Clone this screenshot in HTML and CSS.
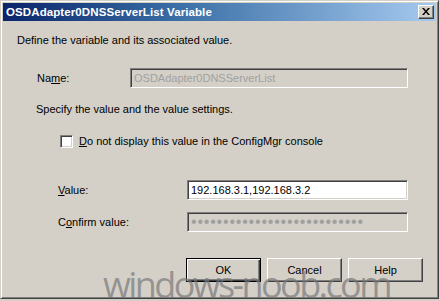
FILE: index.html
```html
<!DOCTYPE html>
<html>
<head>
<meta charset="utf-8">
<link rel="stylesheet" href="styles.css">
</head>
<body>
<div class="window">
  <div class="titlebar">
    <span class="title">OSDAdapter0DNSServerList Variable</span>
    <span class="close"><svg width="8" height="7" viewBox="0 0 8 7"><path d="M0 0h2l2 2.5 2-2.5h2l-3 3.5 3 3.5h-2l-2-2.5-2 2.5h-2l3-3.5z" fill="#000"/></svg></span>
  </div>
  <div class="content">
    <div class="intro">Define the variable and its associated value.</div>
    <div class="row name-row">
      <span class="label name-label">Na<u>m</u>e:</span>
      <div class="field disabled name-field">OSDAdapter0DNSServerList</div>
    </div>
    <div class="specify">Specify the value and the value settings.</div>
    <div class="check-row">
      <span class="checkbox"></span>
      <span class="check-label"><u>D</u>o not display this value in the ConfigMgr console</span>
    </div>
    <div class="row value-row">
      <span class="label sub-label"><u>V</u>alue:</span>
      <div class="field value-field">192.168.3.1,192.168.3.2</div>
    </div>
    <div class="row confirm-row">
      <span class="label sub-label">C<u>o</u>nfirm value:</span>
      <div class="field disabled value-field dots">•••••••••••••••••••••••••••</div>
    </div>
    <div class="buttons">
      <button class="btn default">OK</button>
      <button class="btn">Cancel</button>
      <button class="btn">Help</button>
    </div>
  </div>
  <div class="watermark">windows-noob.com</div>
</div>
</body>
</html>
```
FILE: styles.css
```css
html, body {
  margin: 0;
  padding: 0;
  width: 439px;
  height: 301px;
  overflow: hidden;
  background: #d4d0c8;
}
.window {
  position: relative;
  box-sizing: border-box;
  width: 439px;
  height: 299px;
  background: #d4d0c8;
  border-top: 1px solid #d4d0c8;
  border-left: 1px solid #d4d0c8;
  border-right: 1px solid #404040;
  border-bottom: 1px solid #404040;
  box-shadow: inset 1px 1px 0 #fff, inset -1px -1px 0 #808080;
  padding: 2px 2px;
  font-family: "Liberation Sans", Arial, sans-serif;
  font-size: 11px;
  color: #000;
  overflow: hidden;
}
.titlebar {
  height: 18px;
  display: flex;
  align-items: center;
  justify-content: space-between;
  background: linear-gradient(to right, #0a246a 0%, #3a6ea5 40%, #a6caf0 100%);
  padding: 0 2px 0 3px;
}
.title {
  color: #fff;
  font-weight: bold;
  font-size: 11.5px;
  letter-spacing: 0.1px;
}
.close {
  box-sizing: border-box;
  width: 16px;
  height: 14px;
  background: #d4d0c8;
  border-top: 1px solid #fff;
  border-left: 1px solid #fff;
  border-right: 1px solid #404040;
  border-bottom: 1px solid #404040;
  box-shadow: inset -1px -1px 0 #808080;
  display: flex;
  align-items: center;
  justify-content: center;
  padding-bottom: 1px;
}
.content {
  padding: 13px 0 0 14px;
}
.intro {
  line-height: 13px;
}
.row {
  display: flex;
  align-items: center;
}
.name-row {
  margin-top: 21px;
}
.name-label {
  margin-left: 20px;
  flex: 0 0 93px;
}
.label {
  line-height: 13px;
}
.field {
  box-sizing: border-box;
  height: 20px;
  border-top: 1px solid #808080;
  border-left: 1px solid #808080;
  border-right: 1px solid #fff;
  border-bottom: 1px solid #fff;
  box-shadow: inset 1px 1px 0 #404040, inset -1px -1px 0 #d4d0c8;
  background: #fff;
  padding: 3px 3px;
  line-height: 13px;
  white-space: nowrap;
  overflow: hidden;
}
.field.disabled {
  background: #d4d0c8;
  color: #a0a0a0;
}
.name-field {
  width: 278px;
}
.specify {
  margin-top: 15px;
  margin-left: 19px;
  line-height: 13px;
}
.check-row {
  display: flex;
  align-items: center;
  margin-top: 19px;
  margin-left: 43px;
}
.checkbox {
  box-sizing: border-box;
  width: 13px;
  height: 13px;
  background: #fff;
  border-top: 1px solid #808080;
  border-left: 1px solid #808080;
  border-right: 1px solid #fff;
  border-bottom: 1px solid #fff;
  box-shadow: inset 1px 1px 0 #404040, inset -1px -1px 0 #d4d0c8;
  margin-right: 6px;
}
.check-label {
  line-height: 13px;
}
.value-row {
  margin-top: 32px;
}
.confirm-row {
  margin-top: 12px;
}
.sub-label {
  flex: 0 0 129px;
  margin-left: 41px;
}
.value-field {
  width: 221px;
}
.dots {
  color: #8c8c8c;
  font-size: 16px;
  line-height: 13px;
  letter-spacing: 0.8px;
  padding-top: 2px;
}
.buttons {
  display: flex;
  gap: 6px;
  margin-top: 26px;
  margin-left: 169px;
}
.btn {
  box-sizing: border-box;
  width: 75px;
  height: 24px;
  font-family: "Liberation Sans", Arial, sans-serif;
  font-size: 11px;
  color: #000;
  background: #d4d0c8;
  border-top: 1px solid #fff;
  border-left: 1px solid #fff;
  border-right: 1px solid #404040;
  border-bottom: 1px solid #404040;
  box-shadow: inset -1px -1px 0 #808080;
  padding: 0;
}
.btn.default {
  border: 1px solid #000;
  box-shadow: inset 1px 1px 0 #fff, inset -1px -1px 0 #404040, inset -2px -2px 0 #808080;
}
.watermark {
  position: absolute;
  left: 102px;
  top: 264px;
  font-family: "Open Sans", sans-serif;
  font-size: 36px;
  color: rgba(120, 120, 120, 0.7);
  line-height: 40px;
  letter-spacing: -2.6px;
  pointer-events: none;
}
```
